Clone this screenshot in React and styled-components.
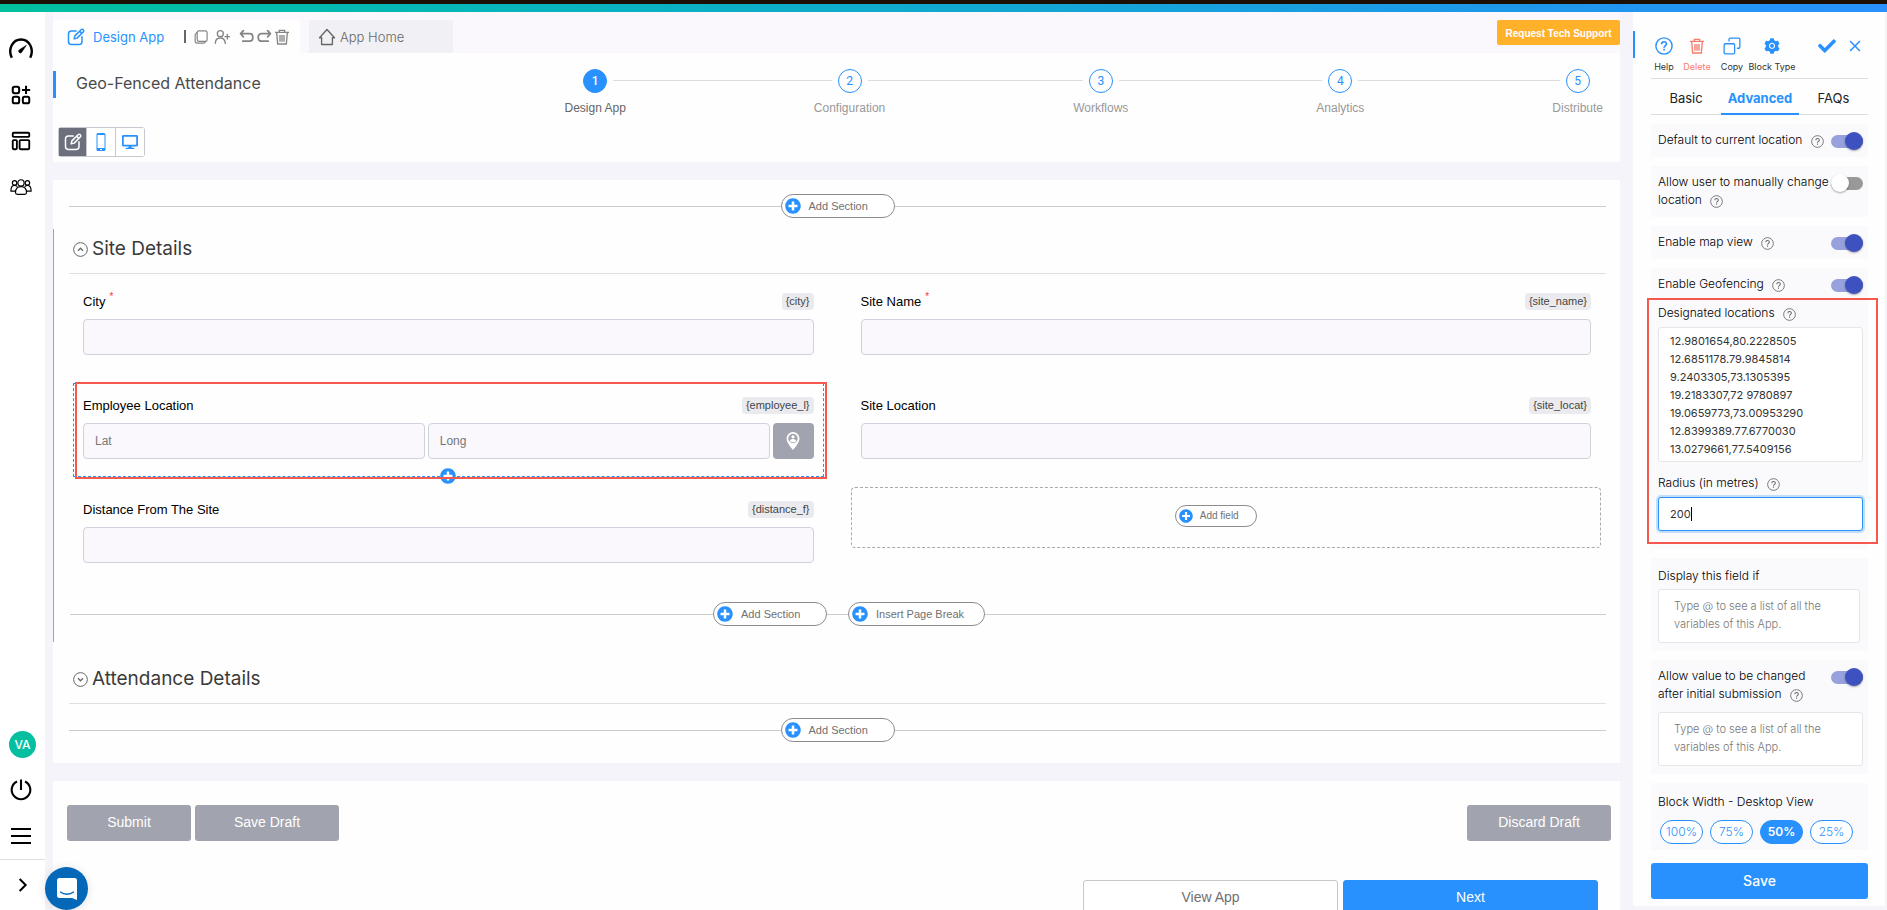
import React, { useState } from 'react';
import styled, { createGlobalStyle, css } from 'styled-components';
import { FaPlusCircle, FaCheck, FaDesktop } from 'react-icons/fa';
import { AiFillSetting } from 'react-icons/ai';

const GlobalStyle = createGlobalStyle`
  * { box-sizing: border-box; }
  body {
    margin: 0;
    overflow: hidden;
    background: #f5f4fa;
    color: #222;
    font-family: "Liberation Sans", Arial, sans-serif;
  }
  button, input, textarea { font-family: inherit; margin: 0; }
  button { cursor: pointer; }
  svg { display: block; flex: none; }
`;

const blue = '#2891fd';

/* ---------- icons ---------- */

const Line = ({ size = 20, w = 2, children, ...rest }) => (
    <svg width={size} height={size} viewBox="0 0 24 24" fill="none" stroke="currentColor" strokeWidth={w} {...rest}>
        {children}
    </svg>
);

const EditIcon = ({ size }) => (
    <Line size={size} w={2} strokeLinejoin="round">
        <path d="M13 4H6a4 4 0 0 0-4 4v10a4 4 0 0 0 4 4h10a4 4 0 0 0 4-4v-7" />
        <path d="M9.5 14.5l1-4 8.6-8.4a1.6 1.6 0 0 1 2.3 0l.5.5a1.6 1.6 0 0 1 0 2.3l-8.4 8.6z" />
        <path d="M17 4.5l2.6 2.6" />
    </Line>
);
const PagesIcon = () => (
    <Line size={14} w={2}>
        <rect x="5.5" y="1.5" width="17" height="18" rx="3" />
        <path d="M5 4L2 8v11a3.500 3.500 0 0 0 3.500 3.500H17l4-3" />
    </Line>
);
const UserPlusIcon = () => (
    <Line size={16} w={2} strokeLinecap="round">
        <circle cx="9.500" cy="7" r="4.500" />
        <path d="M2 21.500c0-5 3-8 7.500-8s7 3 7.500 8M20 8v7M16.500 11.500h7" />
    </Line>
);
const UndoIcon = () => (
    <Line size={15} w={2.800} strokeLinejoin="round" strokeLinecap="round">
        <path d="M7 2.500L2.500 7.500 7 12.500M3 7.500h14a5 5 0 0 1 5 5v2a5 5 0 0 1-5 5H6" />
    </Line>
);
const RedoIcon = () => (
    <Line size={15} w={2.800} strokeLinejoin="round" strokeLinecap="round">
        <path d="M17 2.500l4.500 5-4.500 5M21 7.500H7a5 5 0 0 0-5 5v2a5 5 0 0 0 5 5h11" />
    </Line>
);
const TrashIcon = ({ size = 17 }) => (
    <Line size={size} w={2}>
        <path d="M1.500 5h21M8 4.500V2h8v2.500M4 5.500l1.500 17h13L20 5.500M9 9v10M12 9v10M15 9v10" />
    </Line>
);
const HomeIcon = () => (
    <Line size={18} w={1.800} strokeLinejoin="round">
        <path d="M2 13L12 2l10 11h-2.800v9H4.800v-9z" />
    </Line>
);
const GaugeIcon = () => (
    <Line size={26} w={2.200}>
        <path d="M3.500 20C-.5 12 4.500 3.200 12 3.200S24.500 12 20.500 20" />
        <path d="M17 8.500l-4.200 6.300a1.600 1.600 0 1 1-2.300-2.100z" fill="currentColor" strokeWidth=".5" />
    </Line>
);
const AppsIcon = () => (
    <Line size={22} w={2.200}>
        <rect x="3" y="3" width="7" height="7" rx="2" />
        <rect x="3" y="14" width="7" height="7" rx="2" />
        <rect x="14" y="14" width="7" height="7" rx="2" />
        <path d="M17.500 2v9M13 6.500h9" />
    </Line>
);
const TemplateIcon = () => (
    <Line size={22} w={2}>
        <rect x="3" y="3" width="18" height="4.500" rx="1" />
        <rect x="3" y="11" width="4.500" height="10" rx="1" />
        <rect x="10.500" y="11" width="10.500" height="10" rx="1" />
    </Line>
);
const PeopleIcon = () => (
    <Line size={22} w={1.300}>
        <circle cx="12" cy="7.500" r="3.400" />
        <circle cx="5" cy="7.500" r="2.400" />
        <circle cx="19" cy="7.500" r="2.400" />
        <path d="M6 18c0-4 2-6.500 6-6.500s6 2.500 6 6.500c0 1.500-.8 2-2 2H8c-1.200 0-2-.5-2-2zM5.500 16.500H1c0-4 1-6.300 4-6.300 1.300 0 2.300.4 3 1.500M18.500 16.500H23c0-4-1-6.300-4-6.300-1.300 0-2.300.4-3 1.500" />
    </Line>
);
const PowerIcon = () => (
    <Line size={24} w={2.100}>
        <path d="M8 3.500a9.300 9.300 0 1 0 8 0M12 1.500v10.500" />
    </Line>
);
const MenuIcon = () => (
    <Line size={24} w={2}>
        <path d="M2 5h20M2 12h20M2 19h20" />
    </Line>
);
const ChevronIcon = () => (
    <Line size={16} w={3}>
        <path d="M7 3l9 9-9 9" />
    </Line>
);
const PhoneIcon = () => (
    <svg width="20" height="20" viewBox="0 0 20 20">
        <path
            fill="currentColor"
            fillRule="evenodd"
            d="M7 1h6a1.500 1.500 0 0 1 1.500 1.500v15a1.500 1.500 0 0 1-1.500 1.500H7a1.500 1.500 0 0 1-1.500-1.500v-15A1.500 1.500 0 0 1 7 1zM6.500 3v13h7V3zM9 17v1h2v-1z"
        />
    </svg>
);
const HelpIcon = ({ size = 14, w = 1.6 }) => (
    <Line size={size} w={w}>
        <circle cx="12" cy="12" r="10.800" />
        <path d="M8.800 9.500c0-4.200 6.600-4 6.600-.4 0 2.400-3.300 2.600-3.300 5.200M12.100 15.800v2.200" strokeWidth={w + 0.3} />
    </Line>
);
const CopyIcon = () => (
    <Line size={18} w={1.700}>
        <rect x="1.500" y="9" width="14" height="13.500" rx="1.500" />
        <path d="M8 6V3a1.500 1.500 0 0 1 1.500-1.500H21A1.500 1.500 0 0 1 22.500 3v10.500A1.500 1.500 0 0 1 21 15h-2.500" />
    </Line>
);
const CloseIcon = () => (
    <Line size={14} w={2.600}>
        <path d="M3.500 3.500l17 17M20.500 3.500l-17 17" />
    </Line>
);
const PinIcon = () => (
    <svg width="20" height="20" viewBox="0 0 20 20">
        <path fill="#fff" d="M10 1a6.500 6.500 0 0 0-6.500 6.500C3.500 12 10 19 10 19s6.500-7 6.500-11.500A6.500 6.500 0 0 0 10 1z" />
        <circle cx="10" cy="7.500" r="4.700" fill="#a1a4ae" />
        <circle cx="10" cy="5.800" r="1.600" fill="#fff" />
        <path fill="#fff" d="M6.800 9.900c.5-1.600 1.700-2 3.200-2s2.700.4 3.200 2c-1.500 1.800-4.900 1.800-6.400 0z" />
    </svg>
);
const SectionToggleIcon = ({ open }) => (
    <Line size={15} w={1.600}>
        <circle cx="12" cy="12" r="11" />
        <path d={open ? 'M8 14l4-4 4 4' : 'M8 10l4 4 4-4'} strokeWidth="2" />
    </Line>
);
const ChatIcon = () => (
    <svg width="20" height="22" viewBox="0 0 20 22">
        <path fill="#fff" d="M2.500 0h15A2.500 2.500 0 0 1 20 2.500V22l-5-2H2.500A2.500 2.500 0 0 1 0 17.500v-15A2.500 2.500 0 0 1 2.500 0z" />
        <path d="M3.500 14c3.500 3 9.500 3 13 0" fill="none" stroke="#0567b8" strokeWidth="1.300" strokeLinecap="round" />
    </svg>
);

/* ---------- shell ---------- */

const Page = styled.div`
  display: flex;
  flex-direction: column;
  height: 100vh;
`;
const TopStrip = styled.div`
  flex: none;
  height: 12px;
  border-top: 4px solid #1c0f05;
  background: linear-gradient(90deg, #00c09e, #08b4be 30%, #1e98ea 80%, #2891fd);
`;
const Body = styled.div`
  display: grid;
  grid-template-columns: 45px minmax(0, 1fr) 252px;
  flex: 1;
  min-height: 0;
  padding-right: 2px;
`;
const Sidebar = styled.nav`
  display: flex;
  flex-direction: column;
  align-items: center;
  background: #fff;
  color: #000;
  padding-right: 4px;
`;
const SideButton = styled.button`
  display: grid;
  place-items: center;
  width: 41px;
  height: 46px;
  padding: 0;
  border: 0;
  background: none;
  color: inherit;
`;
const SideTop = styled.div`
  padding-top: 14px;
  flex: 1;
`;
const Avatar = styled.span`
  display: grid;
  place-items: center;
  width: 27px;
  height: 27px;
  margin-left: 4px;
  border-radius: 50%;
  background: #05bfa0;
  color: #fff;
  font: 500 12px Inter, sans-serif;
`;
const SideFoot = styled.div`
  display: grid;
  place-items: center;
  width: 45px;
  height: 51px;
  margin-right: -4px;
  border-top: 1px solid #ddd;
`;
const ChatButton = styled.button`
  position: fixed;
  left: 45px;
  bottom: 0;
  display: grid;
  place-items: center;
  width: 43px;
  height: 43px;
  border: 0;
  border-radius: 50%;
  background: #0567b8;
  box-shadow: 0 1px 10px rgba(0, 0, 0, 0.12);
`;

/* ---------- main column ---------- */

const Main = styled.main`
  display: flex;
  flex-direction: column;
  min-height: 0;
  padding: 0 13px 0 8px;
  gap: 18px;
  overflow: hidden;
`;
const Head = styled.header`
  flex: none;
  background: #fefefe;
`;
const TabBar = styled.div`
  display: flex;
  align-items: flex-end;
  height: 41px;
  background: #faf8fc;
`;
const DesignTab = styled.div`
  display: flex;
  align-items: center;
  width: 247px;
  height: 33px;
  padding-left: 14px;
  background: #fefefe;
  color: #858585;
`;
const TabLink = styled.a`
  display: flex;
  align-items: center;
  gap: 8px;
  color: ${(p) => (p.$muted ? '#666' : blue)};
  font: ${(p) => (p.$muted ? 300 : 400)} 13px Inter, sans-serif;
  text-decoration: none;
`;
const Rule = styled.span`
  width: 2px;
  height: 13px;
  margin: 0 6px 0 20px;
  background: #666;
`;
const ToolButton = styled.button`
  display: grid;
  place-items: center;
  width: 18px;
  height: 20px;
  margin-right: ${(p) => p.$gap || 0}px;
  padding: 0;
  border: 0;
  background: none;
  color: inherit;
`;
const HomeTab = styled.div`
  display: flex;
  align-items: center;
  width: 144px;
  height: 33px;
  margin-left: 9px;
  padding-left: 9px;
  background: #f1f1f5;
  ${TabLink} { gap: 4px; }
`;
const SupportButton = styled.button`
  align-self: center;
  width: 123px;
  height: 25px;
  margin-left: auto;
  padding: 2px 0 0;
  border: 0;
  border-radius: 2px;
  background: #ffb12a;
  color: #fff;
  font-size: 10px;
  font-weight: 700;
`;
const TitleRow = styled.div`
  display: flex;
  align-items: flex-start;
  height: 74px;
  padding: 15px 17px 0 0;
`;
const Title = styled.h1`
  flex: 0 0 33%;
  margin: 3px 0 0;
  padding: 0 0 2px 20px;
  border-left: 3px solid ${blue};
  color: #4a4a4a;
  font: 400 16px/25px Inter, sans-serif;
`;
const Steps = styled.ol`
  position: relative;
  display: flex;
  flex: 1;
  justify-content: space-between;
  margin: 0;
  padding: 1px 0 0;
  list-style: none;
  &::before {
    content: '';
    position: absolute;
    top: 12px;
    left: 30px;
    right: 24px;
    border-top: 1px solid #ddd;
  }
`;
const Step = styled.li`
  position: relative;
  display: flex;
  flex-direction: column;
  align-items: center;
  gap: 8px;
  color: ${(p) => (p.$on ? '#666' : '#999')};
  font-size: 12px;
  line-height: 14px;
  span {
    width: 24px;
    height: 24px;
    border: 1px solid ${blue};
    border-radius: 50%;
    background: ${(p) => (p.$on ? blue : '#fefefe')};
    box-shadow: 0 0 0 6px #fefefe;
    color: ${(p) => (p.$on ? '#fff' : blue)};
    font: ${(p) => (p.$on ? 500 : 400)} 12px/22px Roboto, sans-serif;
    text-align: center;
  }
`;
const Modes = styled.div`
  display: flex;
  width: max-content;
  margin: 0 0 5px 5px;
  border: 1px solid #c8c8d0;
  border-radius: 3px;
`;
const ModeButton = styled.button`
  display: grid;
  place-items: center;
  width: ${(p) => (p.$on ? 27 : 29)}px;
  height: 28px;
  padding: 0;
  border: 0;
  border-left: ${(p) => (p.$on ? 0 : '1px solid #c8c8d0')};
  background: ${(p) => (p.$on ? '#6c707d' : '#fff')};
  color: ${(p) => (p.$on ? '#fff' : blue)};
`;

const Card = styled.section`
  flex: none;
  background: #fefefe;
`;
const Divider = styled.div`
  display: flex;
  align-items: center;
  height: 24px;
  margin: 0 14px 0 16px;
  &::before, &::after {
    content: '';
    flex: 1;
    border-top: 1px solid #ccc;
  }
  &::before { min-width: ${(p) => (p.$shift ? 'calc(50% - 125px)' : 0)}; }
`;
const Join = styled.span`
  width: 21px;
  border-top: 1px solid #ccc;
`;
const PillButton = styled.button`
  display: flex;
  align-items: center;
  gap: ${(p) => (p.$small ? 7 : 8)}px;
  width: ${(p) => p.$w}px;
  height: ${(p) => (p.$small ? 22 : 24)}px;
  padding: 0 3px;
  border: 1px solid #8c8c8c;
  border-radius: 12px;
  background: #fff;
  color: #707070;
  font-size: ${(p) => (p.$small ? 10 : 11)}px;
  svg { color: ${blue}; }
`;
const DividerRow = styled.div`
  padding: 14px 0 ${(p) => (p.$last ? 21 : 11)}px;
`;
const Group = styled.section`
  padding-bottom: ${(p) => (p.$on ? 16 : 0)}px;
  border-left: 1px solid ${(p) => (p.$on ? '#9aa3bb' : 'transparent')};
`;
const GroupTitle = styled.h2`
  display: flex;
  align-items: flex-end;
  gap: 4px;
  height: ${(p) => p.$h}px;
  margin: 0 14px 0 15px;
  padding: 0 0 9px 4px;
  border-bottom: 1px solid #e0e0e3;
  color: #3a3a3a;
  font: 400 19px/30px Inter, sans-serif;
  button {
    padding: 0 0 7px;
    border: 0;
    background: none;
    color: #666;
  }
`;
const Fields = styled.div`
  display: grid;
  grid-template-columns: 1fr 1fr;
  grid-auto-rows: 94px;
  gap: 10px 27px;
  margin: 5px 19px 21px;
`;
const Cell = styled.div`
  position: relative;
  padding: 9px 9px 0;
  border: 1px dashed ${(p) => (p.$on ? blue : 'transparent')};
`;
const LabelRow = styled.div`
  display: flex;
  align-items: center;
  justify-content: space-between;
  height: 30px;
  color: #000;
  font-size: 13px;
  padding-bottom: 6px;
  sup {
    margin-left: 4px;
    color: #f33;
    font-size: 10px;
    line-height: 0;
  }
`;
const Tag = styled.span`
  height: 17px;
  padding: 0 4px;
  border-radius: 4px;
  background: #ebebef;
  color: #444;
  font-size: 11px;
  line-height: 16px;
`;
const TextBox = styled.input`
  width: 100%;
  min-width: 0;
  height: 36px;
  padding: 0 11px;
  border: 1px solid #ced3de;
  border-radius: 4px;
  background: #faf8fc;
  font-size: 12px;
  &::placeholder { color: #777; }
`;
const LatLong = styled.div`
  display: grid;
  grid-template-columns: 1fr 1fr 41px;
  gap: 3px;
`;
const PinButton = styled.button`
  display: grid;
  place-items: center;
  padding: 0;
  border: 0;
  border-radius: 4px;
  background: #a1a4ae;
`;
const Outline = styled.div`
  position: absolute;
  inset: ${(p) => p.$inset};
  border: 2px solid #f5584c;
  pointer-events: none;
`;
const CellPlus = styled.button`
  position: absolute;
  left: 50%;
  bottom: -8px;
  margin-left: -8px;
  padding: 0;
  border: 0;
  border-radius: 50%;
  background: #fff;
  color: ${blue};
`;
const Slot = styled.div`
  display: grid;
  place-items: center;
  height: 61px;
  padding: 0 20px 4px 0;
  border: 1px dashed #aaa;
  border-radius: 4px;
`;

const Actions = styled.div`
  display: flex;
  gap: 4px;
  padding: 24px 9px 39px 14px;
`;
const GreyButton = styled.button`
  width: ${(p) => p.$w || 144}px;
  height: 36px;
  margin-left: ${(p) => (p.$end ? 'auto' : 0)};
  padding: 0 0 2px;
  border: 0;
  border-radius: 3px;
  background: #a1a4ae;
  color: #fff;
  font-size: 14px;
`;
const NextRow = styled.div`
  display: flex;
  justify-content: flex-end;
  gap: 5px;
  padding-right: 22px;
`;
const WideButton = styled.button`
  width: 255px;
  height: 36px;
  padding: 0 0 2px;
  border: 1px solid ${(p) => (p.$primary ? blue : '#c8c8c8')};
  border-radius: 3px;
  background: ${(p) => (p.$primary ? blue : '#fff')};
  color: ${(p) => (p.$primary ? '#fff' : '#707070')};
  font-size: 14px;
`;

/* ---------- settings panel ---------- */

const Panel = styled.aside`
  display: flex;
  flex-direction: column;
  margin-bottom: 4px;
  padding: 0 17px 7px 18px;
  background: #fefefe;
  font-family: Inter, sans-serif;
`;
const PanelTools = styled.div`
  position: relative;
  display: flex;
  align-items: flex-start;
  flex: none;
  height: 67px;
  padding-top: 24px;
  border-bottom: 1px solid #ddd;
  &::before {
    content: '';
    position: absolute;
    left: -18px;
    top: 19px;
    height: 27px;
    border-left: 2px solid ${blue};
  }
`;
const PanelTool = styled.button`
  display: flex;
  flex-direction: column;
  align-items: center;
  gap: 5px;
  width: ${(p) => p.$w}px;
  flex: none;
  padding: 0;
  border: 0;
  background: none;
  color: ${(p) => (p.$danger ? '#f97b6b' : '#333')};
  font-size: 9px;
  line-height: 11px;
  white-space: nowrap;
  svg { height: 20px; color: ${(p) => (p.$danger ? '#f97b6b' : blue)}; }
`;
const Confirm = styled.div`
  display: flex;
  gap: 12px;
  margin: 0 6px 0 auto;
`;
const Tabs = styled.div`
  display: grid;
  grid-template-columns: 70px 78px 1fr;
  flex: none;
  height: 36px;
  border-bottom: 1px solid #ddd;
`;
const Tab = styled.button`
  margin-bottom: -1px;
  padding: 4px 0 0;
  border: 0;
  border-bottom: 2px solid ${(p) => (p.$on ? blue : 'transparent')};
  background: none;
  color: ${(p) => (p.$on ? blue : '#222')};
  font-size: 13px;
  font-weight: ${(p) => (p.$on ? 700 : 400)};
`;
const Box = styled.div`
  position: relative;
  flex: none;
  margin-top: 9px;
  padding: ${(p) => p.$pad || '7px 5px 8px 7px'};
  border-radius: 2px;
  background: #faf9fc;
`;
const Option = styled.div`
  display: flex;
  align-items: flex-start;
  label { flex: 1; }
`;
const Caption = styled.label`
  display: block;
  color: #000;
  font-size: 12px;
  font-weight: 300;
  line-height: 18px;
  svg {
    display: inline-block;
    margin-left: 5px;
    color: #666;
    vertical-align: -4px;
  }
`;
const Switch = styled.input`
  appearance: none;
  position: relative;
  flex: none;
  width: 32px;
  height: 13px;
  margin: 4px 0 0;
  border-radius: 7px;
  background: #999;
  &::before {
    content: '';
    position: absolute;
    top: -3px;
    left: 0;
    width: 18px;
    height: 18px;
    border-radius: 50%;
    background: #fff;
    box-shadow: 0 1px 2px rgba(0, 0, 0, 0.35);
  }
  &:checked { background: #97a1dd; }
  &:checked::before {
    left: auto;
    right: 0;
    background: #3d52bf;
  }
`;
const areaLook = css`
  display: block;
  border: 1px solid #e6e6ea;
  border-radius: 3px;
  background: #fff;
  font: 400 11px/18px Inter, sans-serif;
  resize: none;
  overflow: hidden;
`;
const GeoFields = styled.div`
  padding-top: 11px;
`;
const Places = styled.textarea`
  ${areaLook}
  width: 100%;
  height: 135px;
  margin: 5px 0 12px;
  padding: 4px 11px;
  color: #333;
`;
const Condition = styled.textarea`
  ${areaLook}
  width: ${(p) => (p.$short ? 'calc(100% - 3px)' : '100%')};
  height: 54px;
  margin-top: ${(p) => p.$top}px;
  padding: 7px 15px;
  &::placeholder { color: #777; font-weight: 300; }
`;
const Radius = styled.div`
  display: flex;
  align-items: center;
  height: 34px;
  margin-top: 5px;
  padding-left: 11px;
  border: 1px solid ${blue};
  border-radius: 3px;
  background: #fff;
  box-shadow: 0 0 0 2px #c3defb;
  input {
    field-sizing: content;
    padding: 0;
    border: 0;
    outline: 0;
    color: #333;
    font: 400 11px/18px Inter, sans-serif;
  }
`;
const Caret = styled.i`
  width: 1px;
  height: 14px;
  background: #000;
`;
const Widths = styled.div`
  display: flex;
  gap: 7px;
  margin: 9px 0 0 2px;
`;
const WidthPill = styled.button`
  width: 43px;
  height: 24px;
  padding: 0 0 2px;
  border: 1px solid ${blue};
  border-radius: 12px;
  background: ${(p) => (p.$on ? blue : '#fff')};
  color: ${(p) => (p.$on ? '#fff' : blue)};
  font: ${(p) => (p.$on ? 600 : 300)} 12px Inter, sans-serif;
`;
const SaveButton = styled.button`
  flex: none;
  height: 36px;
  margin-top: auto;
  padding: 0 0 2px;
  border: 0;
  border-radius: 3px;
  background: ${blue};
  color: #fff;
  font: 500 14px Inter, sans-serif;
`;

const STEPS = ['Design App', 'Configuration', 'Workflows', 'Analytics', 'Distribute'];
const WIDTHS = ['100%', '75%', '50%', '25%'];
const PLACES = `12.9801654,80.2228505
12.6851178.79.9845814
9.2403305,73.1305395
19.2183307,72 9780897
19.0659773,73.00953290
12.8399389.77.6770030
13.0279661,77.5409156`;
const HINT = 'Type @ to see a list of all the variables of this App.';

const AddButton = ({ children, w = 114, small }) => (
    <PillButton type="button" $w={w} $small={small}>
        <FaPlusCircle size={small ? 14 : 16} />
        {children}
    </PillButton>
);

const Field = ({ id, label, tag, required }) => (
    <Cell>
        <LabelRow>
            <label htmlFor={id}>{label}{required && <sup>*</sup>}</label>
            <Tag>{tag}</Tag>
        </LabelRow>
        <TextBox id={id} />
    </Cell>
);

const Toggle = ({ id, label, on }) => (
    <Option>
        <Caption htmlFor={id}>{label} <HelpIcon size={13} /></Caption>
        <Switch id={id} type="checkbox" defaultChecked={on} />
    </Option>
);

const App = () => {
    const [width, setWidth] = useState('50%');

    return (
        <Page>
            <GlobalStyle />
            <TopStrip />
            <Body>
                <Sidebar>
                    <SideTop>
                        <SideButton aria-label="Dashboard"><GaugeIcon /></SideButton>
                        <SideButton aria-label="Apps"><AppsIcon /></SideButton>
                        <SideButton aria-label="Templates"><TemplateIcon /></SideButton>
                        <SideButton aria-label="Users"><PeopleIcon /></SideButton>
                    </SideTop>
                    <SideButton aria-label="Profile"><Avatar>VA</Avatar></SideButton>
                    <SideButton aria-label="Log out"><PowerIcon /></SideButton>
                    <SideButton aria-label="Menu"><MenuIcon /></SideButton>
                    <SideFoot>
                        <SideButton aria-label="Expand"><ChevronIcon /></SideButton>
                    </SideFoot>
                </Sidebar>

                <Main>
                    <Head>
                        <TabBar>
                            <DesignTab>
                                <TabLink href="#design"><EditIcon size={18} />Design App</TabLink>
                                <Rule />
                                <ToolButton aria-label="Pages" $gap={3}><PagesIcon /></ToolButton>
                                <ToolButton aria-label="Add user" $gap={6}><UserPlusIcon /></ToolButton>
                                <ToolButton aria-label="Undo"><UndoIcon /></ToolButton>
                                <ToolButton aria-label="Redo"><RedoIcon /></ToolButton>
                                <ToolButton aria-label="Delete app"><TrashIcon size={16} /></ToolButton>
                            </DesignTab>
                            <HomeTab>
                                <TabLink href="#home" $muted><HomeIcon />App Home</TabLink>
                            </HomeTab>
                            <SupportButton>Request Tech Support</SupportButton>
                        </TabBar>
                        <TitleRow>
                            <Title>Geo-Fenced Attendance</Title>
                            <Steps>
                                {STEPS.map((name, i) => (
                                    <Step key={name} $on={i === 0}><span>{i + 1}</span>{name}</Step>
                                ))}
                            </Steps>
                        </TitleRow>
                        <Modes>
                            <ModeButton $on aria-label="Edit"><EditIcon size={18} /></ModeButton>
                            <ModeButton aria-label="Mobile preview"><PhoneIcon /></ModeButton>
                            <ModeButton aria-label="Desktop preview"><FaDesktop size={16} /></ModeButton>
                        </Modes>
                    </Head>

                    <Card>
                        <DividerRow>
                            <Divider><AddButton>Add Section</AddButton></Divider>
                        </DividerRow>
                        <Group $on>
                            <GroupTitle $h={45}>
                                <button aria-label="Collapse"><SectionToggleIcon open /></button>
                                Site Details
                            </GroupTitle>
                            <Fields>
                                <Field id="city" label="City" tag="{city}" required />
                                <Field id="site_name" label="Site Name" tag="{site_name}" required />
                                <Cell $on>
                                    <LabelRow>
                                        <label htmlFor="lat">Employee Location</label>
                                        <Tag>{'{employee_l}'}</Tag>
                                    </LabelRow>
                                    <LatLong>
                                        <TextBox id="lat" placeholder="Lat" />
                                        <TextBox aria-label="Long" placeholder="Long" />
                                        <PinButton aria-label="Use my location"><PinIcon /></PinButton>
                                    </LatLong>
                                    <CellPlus aria-label="Add below"><FaPlusCircle size={16} /></CellPlus>
                                    <Outline $inset="-2px -4px -3px 1px" />
                                </Cell>
                                <Field id="site_location" label="Site Location" tag="{site_locat}" />
                                <Field id="distance" label="Distance From The Site" tag="{distance_f}" />
                                <Slot><AddButton w={82} small>Add field</AddButton></Slot>
                            </Fields>
                            <Divider $shift>
                                <AddButton>Add Section</AddButton>
                                <Join />
                                <AddButton w={137}>Insert Page Break</AddButton>
                            </Divider>
                        </Group>
                        <Group>
                            <GroupTitle $h={62}>
                                <button aria-label="Expand"><SectionToggleIcon /></button>
                                Attendance Details
                            </GroupTitle>
                        </Group>
                        <DividerRow $last>
                            <Divider><AddButton>Add Section</AddButton></Divider>
                        </DividerRow>
                    </Card>

                    <Card>
                        <Actions>
                            <GreyButton $w={124}>Submit</GreyButton>
                            <GreyButton>Save Draft</GreyButton>
                            <GreyButton $end>Discard Draft</GreyButton>
                        </Actions>
                        <NextRow>
                            <WideButton>View App</WideButton>
                            <WideButton $primary>Next</WideButton>
                        </NextRow>
                    </Card>
                </Main>

                <Panel>
                    <PanelTools>
                        <PanelTool $w={26}><HelpIcon size={18} w={1.900} />Help</PanelTool>
                        <PanelTool $w={40} $danger><TrashIcon size={16} />Delete</PanelTool>
                        <PanelTool $w={30}><CopyIcon />Copy</PanelTool>
                        <PanelTool $w={50}><AiFillSetting size={18} />Block Type</PanelTool>
                        <Confirm>
                            <PanelTool $w={18} aria-label="Apply"><FaCheck size={18} /></PanelTool>
                            <PanelTool $w={14} aria-label="Close"><CloseIcon /></PanelTool>
                        </Confirm>
                    </PanelTools>
                    <Tabs>
                        <Tab>Basic</Tab>
                        <Tab $on>Advanced</Tab>
                        <Tab>FAQs</Tab>
                    </Tabs>
                    <Box><Toggle id="current" label="Default to current location" on /></Box>
                    <Box><Toggle id="manual" label="Allow user to manually change location" /></Box>
                    <Box><Toggle id="map" label="Enable map view" on /></Box>
                    <Box $pad="7px 5px 18px 7px">
                        <Toggle id="geofence" label="Enable Geofencing" on />
                        <GeoFields>
                            <Caption htmlFor="places">Designated locations <HelpIcon size={13} /></Caption>
                            <Places id="places" defaultValue={PLACES} />
                            <Caption htmlFor="radius">Radius (in metres) <HelpIcon size={13} /></Caption>
                            <Radius>
                                <input id="radius" defaultValue="200" />
                                <Caret />
                            </Radius>
                        </GeoFields>
                        <Outline $inset="30px -10px 5px -4px" />
                    </Box>
                    <Box $pad="9px 5px 8px 7px">
                        <Caption htmlFor="display">Display this field if</Caption>
                        <Condition id="display" placeholder={HINT} $top={4} $short />
                    </Box>
                    <Box>
                        <Toggle id="change" label="Allow value to be changed after initial submission" on />
                        <Condition aria-label="Change condition" placeholder={HINT} $top={9} />
                    </Box>
                    <Box $pad="10px 5px 6px 7px">
                        <Caption as="div">Block Width - Desktop View</Caption>
                        <Widths>
                            {WIDTHS.map((w) => (
                                <WidthPill key={w} $on={w === width} onClick={() => setWidth(w)}>{w}</WidthPill>
                            ))}
                        </Widths>
                    </Box>
                    <SaveButton>Save</SaveButton>
                </Panel>
            </Body>
            <ChatButton aria-label="Open chat"><ChatIcon /></ChatButton>
        </Page>
    );
};

export default App;
